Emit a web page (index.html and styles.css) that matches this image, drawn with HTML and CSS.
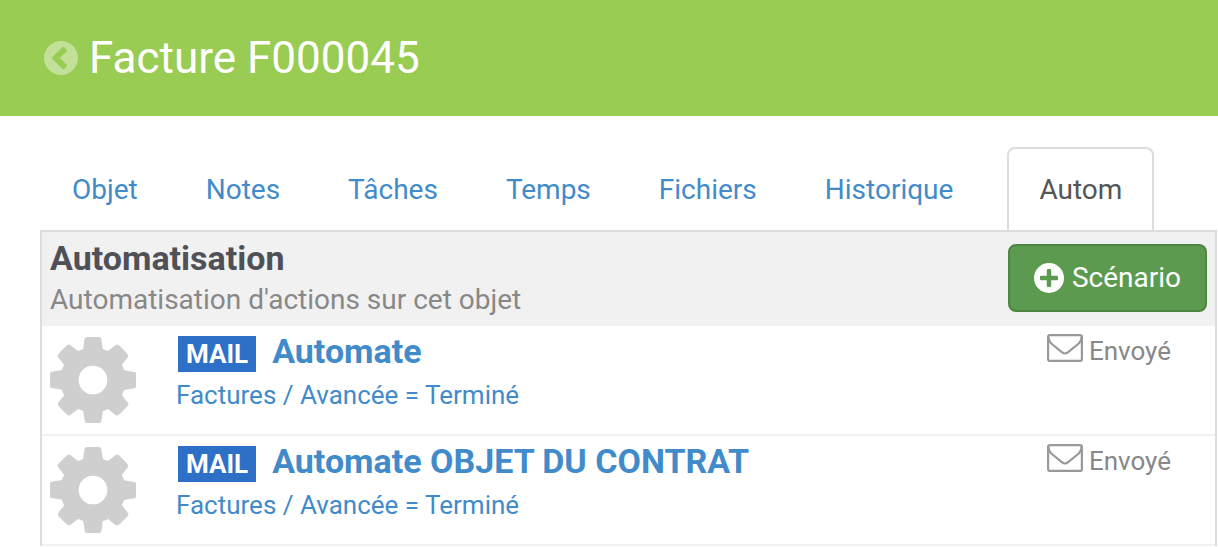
FILE: index.html
```html
<!DOCTYPE html>
<html lang="fr">
<head>
<meta charset="utf-8">
<meta name="viewport" content="width=device-width, initial-scale=1">
<title>Facture F000045</title>
<link rel="stylesheet" href="styles.css">
</head>
<body>
<svg class="sprite" aria-hidden="true">
  <symbol id="icon-cog" viewBox="0 -128 1536 1536">
    <path d="M1024 640q0-106-75-181t-181-75-181 75-75 181 75 181 181 75 181-75 75-181zm512-109v222q0 12-8 23t-20 13l-185 28q-19 54-39 91 35 50 107 138 10 12 10 25t-9 23q-27 37-99 108t-94 71q-12 0-26-9l-138-108q-44 23-91 38-16 136-29 186-7 28-36 28h-222q-14 0-24.5-8.5t-11.500-21.500l-28-184q-49-16-90-37l-141 107q-10 9-25 9-14 0-25-11-126-114-165-168-7-10-7-23 0-12 8-23 15-21 51-66.500t54-70.500q-27-50-41-99l-183-27q-13-2-21-12.500t-8-23.500v-222q0-12 8-23t19-13l186-28q14-46 39-92-40-57-107-138-10-12-10-24 0-10 9-23 26-36 98.500-107.500t94.500-71.500q13 0 26 10l138 107q44-23 91-38 16-136 29-186 7-28 36-28h222q14 0 24.500 8.500t11.500 21.500l28 184q49 16 90 37l142-107q9-9 24-9 13 0 25 10 129 119 165 170 7 8 7 22 0 12-8 23-15 21-51 66.500t-54 70.500q26 50 41 98l183 28q13 2 21 12.500t8 23.500z"/>
  </symbol>
  <symbol id="icon-envelope" viewBox="0 0 36 28">
    <g fill="none" stroke="currentColor" stroke-width="2.200">
      <rect x="1.100" y="1.100" width="33.800" height="25.800" rx="2"/>
      <path d="M1.500 3C1.500 6 3 8.500 5.500 10.500L14.500 17.800C16 19 17 19.500 18 19.500S20 19 21.500 17.800L30.500 10.500C33 8.500 34.500 6 34.500 3"/>
    </g>
  </symbol>
</svg>

<header class="page-header">
  <a class="back" href="#" aria-label="Retour">
    <svg class="back-icon" viewBox="0 0 34 34" aria-hidden="true">
      <path fill-rule="evenodd" d="M17 0a17 17 0 1 0 0 34a17 17 0 1 0 0-34zM18.300 6.200a1.400 1.400 0 0 1 2 0l2.200 2.200a1.400 1.400 0 0 1 0 2L15.900 17l6.600 6.600a1.400 1.400 0 0 1 0 2l-2.200 2.200a1.400 1.400 0 0 1-2 0L8.500 18a1.400 1.400 0 0 1 0-2z"/>
    </svg>
  </a>
  <h1 class="page-title">Facture F000045</h1>
</header>

<main class="content">
  <nav class="tabs">
    <a class="tab" href="#">Objet</a>
    <a class="tab" href="#">Notes</a>
    <a class="tab" href="#">Tâches</a>
    <a class="tab" href="#">Temps</a>
    <a class="tab" href="#">Fichiers</a>
    <a class="tab" href="#">Historique</a>
    <a class="tab tab-active" href="#" aria-current="page">Autom</a>
  </nav>

  <section class="panel">
    <div class="panel-header">
      <div class="panel-heading">
        <h2 class="panel-title">Automatisation</h2>
        <p class="panel-subtitle">Automatisation d'actions sur cet objet</p>
      </div>
      <button class="button" type="button">
        <svg class="button-icon" viewBox="0 0 30 30" aria-hidden="true">
          <path fill-rule="evenodd" d="M15 0a15 15 0 1 0 0 30a15 15 0 1 0 0-30zM14 6h2a1.200 1.200 0 0 1 1.200 1.200V12.800H22.800A1.200 1.200 0 0 1 24 14v2a1.200 1.200 0 0 1-1.200 1.200H17.200V22.800A1.200 1.200 0 0 1 16 24h-2a1.200 1.200 0 0 1-1.200-1.200V17.200H7.200A1.200 1.200 0 0 1 6 16v-2a1.200 1.200 0 0 1 1.200-1.200H12.800V7.200A1.200 1.200 0 0 1 14 6z"/>
        </svg>
        Scénario
      </button>
    </div>

    <article class="row">
      <svg class="cog" aria-hidden="true"><use href="#icon-cog"/></svg>
      <div class="row-body">
        <div class="row-heading">
          <span class="badge">MAIL</span>
          <a class="row-title" href="#">Automate</a>
        </div>
        <a class="row-detail" href="#">Factures / Avancée = Terminé</a>
      </div>
      <div class="status">
        <svg class="envelope" aria-hidden="true"><use href="#icon-envelope"/></svg>
        <span>Envoyé</span>
      </div>
    </article>

    <article class="row">
      <svg class="cog" aria-hidden="true"><use href="#icon-cog"/></svg>
      <div class="row-body">
        <div class="row-heading">
          <span class="badge">MAIL</span>
          <a class="row-title" href="#">Automate OBJET DU CONTRAT</a>
        </div>
        <a class="row-detail" href="#">Factures / Avancée = Terminé</a>
      </div>
      <div class="status">
        <svg class="envelope" aria-hidden="true"><use href="#icon-envelope"/></svg>
        <span>Envoyé</span>
      </div>
    </article>
  </section>
</main>
</body>
</html>
```
FILE: styles.css
```css
* {
  box-sizing: border-box;
}

body {
  margin: 0;
  background: #fff;
  color: #555;
  font-family: Roboto, "Liberation Sans", sans-serif;
  font-size: 28px;
  line-height: 40px;
}

a {
  color: #428bca;
  text-decoration: none;
}

h1,
h2,
p {
  margin: 0;
}

.sprite {
  display: none;
}

.page-header {
  display: flex;
  align-items: center;
  gap: 11px;
  padding: 29px 44px;
  background: #99cc52;
}

.back {
  display: flex;
}

.back-icon {
  width: 34px;
  height: 34px;
  fill: #fff;
  opacity: 0.4;
}

.page-title {
  color: #fff;
  font-size: 44px;
  font-weight: 400;
  line-height: 58px;
}

.content {
  padding: 31px 1px 0 40px;
}

.tabs {
  display: flex;
  gap: 4px;
}

.tab {
  padding: 21px 30px 20px;
  border: 2px solid transparent;
  border-bottom: 0;
  border-radius: 8px 8px 0 0;
}

.tab-active {
  margin-left: 18px;
  border-color: #ddd;
  color: #555;
}

.panel {
  border: 2px solid #ddd;
  border-bottom: 0;
}

.panel-header {
  display: flex;
  align-items: flex-start;
  justify-content: space-between;
  padding: 5px 8px 6px;
  background: #f1f1f1;
}

.panel-title {
  color: #505157;
  font-size: 34px;
  font-weight: 700;
  line-height: 42px;
}

.panel-subtitle {
  padding-top: 1px;
  color: #888;
}

.button {
  display: flex;
  align-items: center;
  gap: 8px;
  margin-top: 7px;
  padding: 12px 24px;
  border: 2px solid #4f8543;
  border-radius: 8px;
  background: #5c9b4f;
  color: #fff;
  font: inherit;
}

.button-icon {
  width: 30px;
  height: 30px;
  fill: #fff;
}

.row {
  display: flex;
  align-items: flex-start;
  padding: 4px 44px 0 8px;
  min-height: 110px;
  border-bottom: 2px solid #f1f1f1;
}

.cog {
  flex: none;
  width: 86px;
  height: 86px;
  margin: 7px 40px 0 0;
  fill: #cfcfcf;
}

.row-body {
  flex: 1;
}

.row-heading {
  display: flex;
  align-items: flex-start;
  gap: 16px;
  padding: 0 0 3px 2px;
}

.badge {
  margin-top: 6px;
  padding: 0 8px;
  background: #2e70c7;
  color: #fff;
  font-size: 26px;
  font-weight: 700;
  line-height: 36px;
}

.row-title {
  font-size: 34px;
  font-weight: 700;
  line-height: 42px;
}

.row-detail {
  font-size: 26px;
}

.status {
  display: flex;
  align-items: flex-start;
  gap: 6px;
  padding-top: 1px;
  color: #888;
  font-size: 26px;
}

.envelope {
  width: 36px;
  height: 28px;
  margin-top: 3px;
  color: #999;
}
```
